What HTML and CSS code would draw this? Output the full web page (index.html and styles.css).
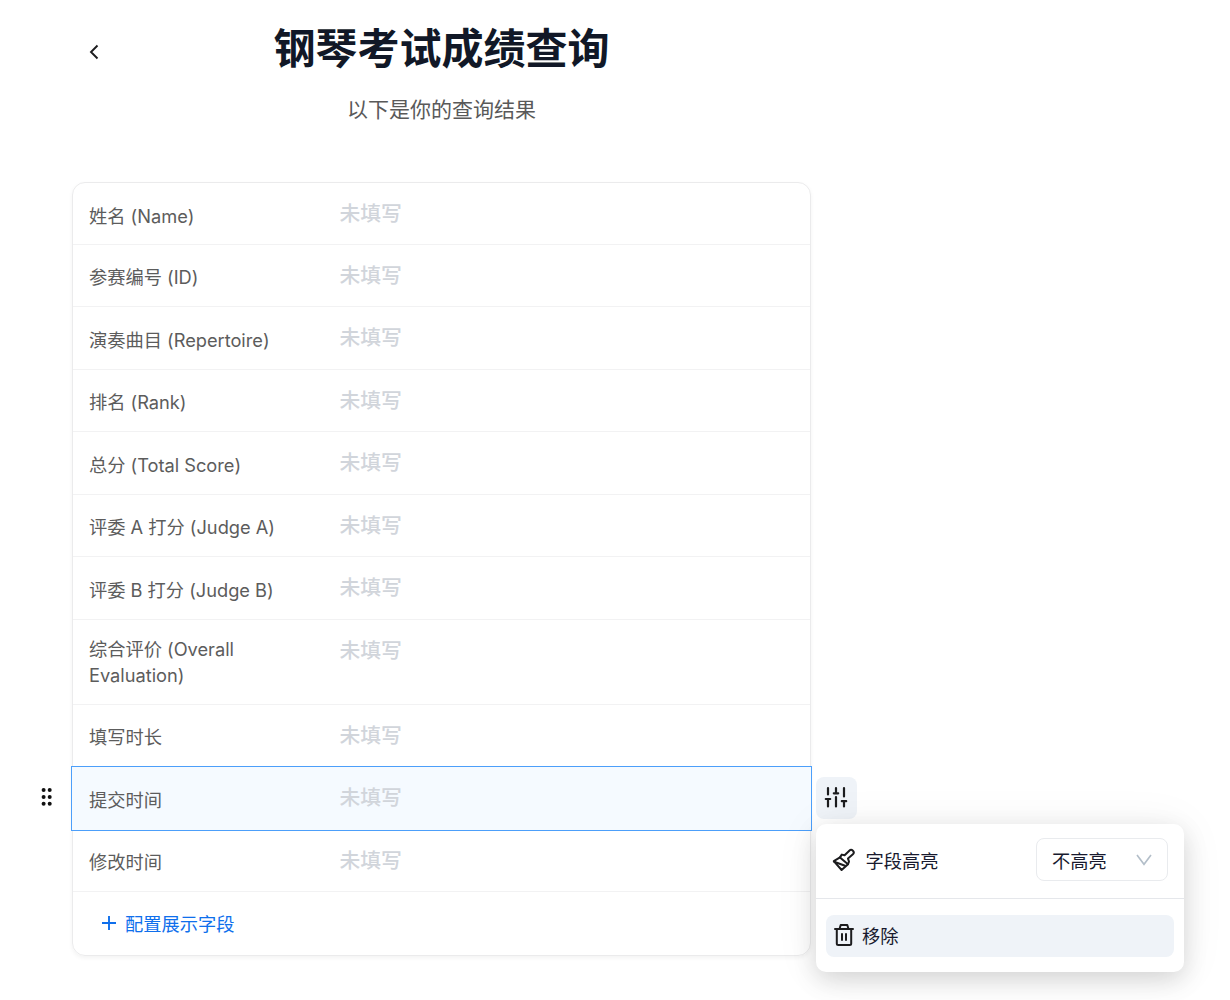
FILE: index.html
```html
<!DOCTYPE html>
<html lang="zh-CN">
<head>
  <meta charset="UTF-8" />
  <meta name="viewport" content="width=device-width, initial-scale=1.0" />
  <title>钢琴考试成绩查询</title>
  <link rel="stylesheet" href="styles.css">
</head>
<body>
  <main class="page">
    <header class="page-header">
      <button class="back-btn" aria-label="返回">
        <svg width="12" height="18" viewBox="0 0 12 18" fill="none" stroke="#1c1c1e" stroke-width="1.9"><path d="M9.5 2.5 3 9 9.5 15.5" /></svg>
      </button>
      <h1>钢琴考试成绩查询</h1>
      <p class="subtitle">以下是你的查询结果</p>
    </header>

    <section class="card">
      <div class="row"><span class="label">姓名 (Name)</span><span class="value">未填写</span></div>
      <div class="row"><span class="label">参赛编号 (ID)</span><span class="value">未填写</span></div>
      <div class="row"><span class="label">演奏曲目 (Repertoire)</span><span class="value">未填写</span></div>
      <div class="row"><span class="label">排名 (Rank)</span><span class="value">未填写</span></div>
      <div class="row"><span class="label">总分 (Total Score)</span><span class="value">未填写</span></div>
      <div class="row"><span class="label">评委 A 打分 (Judge A)</span><span class="value">未填写</span></div>
      <div class="row"><span class="label">评委 B 打分 (Judge B)</span><span class="value">未填写</span></div>
      <div class="row tall"><span class="label">综合评价 (Overall Evaluation)</span><span class="value">未填写</span></div>
      <div class="row"><span class="label">填写时长</span><span class="value">未填写</span></div>
      <div class="row selected">
        <span class="label">提交时间</span><span class="value">未填写</span>
        <svg class="drag-handle" width="12" height="20" viewBox="0 0 12 20" fill="#111">
          <circle cx="2.6" cy="3" r="2" /><circle cx="8.7" cy="3" r="2" />
          <circle cx="2.6" cy="9.9" r="2" /><circle cx="8.7" cy="9.9" r="2" />
          <circle cx="2.6" cy="16.8" r="2" /><circle cx="8.7" cy="16.8" r="2" />
        </svg>
        <button class="settings-btn" aria-label="设置">
          <svg width="24" height="24" viewBox="0 0 24 24" fill="none" stroke="#1c1c1e" stroke-width="2.2" stroke-linecap="round">
            <path d="M4 3v6.5M4 14.2v7.3M1.8 14h4.4M12 3v5M12 12v9.5M9.8 8.3h4.4M20 3v8.5M20 16.4v5.1M17.8 16.2h4.4" />
          </svg>
        </button>
        <div class="menu">
          <div class="menu-row">
            <svg class="brush" width="24" height="24" viewBox="0 0 24 24" fill="none" stroke="#1c1c1e" stroke-width="2" stroke-linejoin="round" stroke-linecap="round">
              <path d="M9.8 6.6 12.6 7.3 17.3 2.7a2.5 2.5 0 0 1 3.6 3.6L16 10.6 17 13.6 16 16.2 9.6 22 1.8 13.2 8 9.4Z" />
              <path d="M8 9.4 16 16.2M2.2 13.8 13 17.8" />
            </svg>
            <span>字段高亮</span>
            <div class="select">
              <span>不高亮</span>
              <svg width="16" height="12" viewBox="0 0 16 12" fill="none" stroke="#b3bec9" stroke-width="1.6"><path d="M1 1 8 10.3 15 1" /></svg>
            </div>
          </div>
          <div class="menu-footer">
            <div class="remove">
              <svg width="20" height="24" viewBox="0 0 20 24" fill="none" stroke="#1c1c1e" stroke-width="2" stroke-linejoin="round" stroke-linecap="round">
                <path d="M1 6h18M5.5 6 6.7 2h6.6l1.2 4M2.8 6v14.5q0 1.5 1.5 1.5h11.4q1.5 0 1.5-1.5V6M8 11v6M12 11v6" />
              </svg>
              <span>移除</span>
            </div>
          </div>
        </div>
      </div>
      <div class="row"><span class="label">修改时间</span><span class="value">未填写</span></div>
      <button class="add-field">
        <svg width="16" height="16" viewBox="0 0 16 16" fill="none" stroke="#0f6fec" stroke-width="1.9"><path d="M8 1v14M1 8h14" /></svg>
        <span>配置展示字段</span>
      </button>
    </section>
  </main>
</body>
</html>
```
FILE: styles.css
```css
:root {
  --blue: #0f6fec;
  --navy: #111827;
  --line: #f2f2f3;
  --hover: #eff3f8;
}

* {
  box-sizing: border-box;
}

html, body {
  margin: 0;
  padding: 0;
  height: 1000px;
  overflow: hidden;
  background: #fff;
  font-family: Inter, "Noto Sans CJK SC", sans-serif;
  font-size: 18.25px;
}

button {
  border: none;
  background: none;
  padding: 0;
  font: inherit;
  cursor: pointer;
}

svg {
  display: block;
  flex: none;
}

.page {
  width: 739px;
  margin-left: 72px;
}

.page-header {
  position: relative;
  height: 182px;
  padding-top: 19px;
  text-align: center;
}

.back-btn {
  position: absolute;
  left: 16px;
  top: 43px;
}

h1 {
  margin: 0;
  font-size: 42px;
  line-height: 60px;
  font-weight: 600;
  color: var(--navy);
}

.subtitle {
  margin: 16px 0 0;
  font-size: 21px;
  line-height: 30px;
  color: #595959;
}

.card {
  height: 774px;
  border: 1px solid #ebebec;
  border-radius: 13px;
  box-shadow: 0 2px 4px rgba(0, 0, 0, 0.05);
}

.row {
  display: flex;
  height: 62.5px;
  padding: 19.5px 16px 0;
  border-bottom: 1px solid var(--line);
}

.row:first-child {
  height: 61.8px;
}

.row.tall {
  height: 85px;
  padding-top: 16px;
}

.label {
  width: 190px;
  margin-right: 60.5px;
  line-height: 26px;
  letter-spacing: -0.02px;
  color: #5c5c5c;
}

.value {
  font-size: 20.8px;
  line-height: 30px;
  margin-top: -3.5px;
  font-weight: 500;
  color: #d1d5db;
}

.tall .value {
  margin-top: 0;
}

.row.selected {
  position: relative;
  height: 64.5px;
  margin: -1px -2px;
  padding: 19.5px 17px 0;
  border: 1px solid #4c9ffa;
  background: #f5faff;
}

.drag-handle {
  position: absolute;
  left: -31px;
  top: 20px;
}

.settings-btn {
  position: absolute;
  left: 743.5px;
  top: 10px;
  width: 41px;
  height: 42px;
  display: flex;
  align-items: center;
  justify-content: center;
  border-radius: 8px;
  background: var(--hover);
}

.settings-btn svg {
  margin-top: -2px;
}

.menu {
  position: absolute;
  left: 743.5px;
  top: 56.5px;
  width: 368.5px;
  height: 148px;
  border-radius: 10px;
  background: #fff;
  box-shadow: 0 8px 24px rgba(0, 0, 0, 0.14), 0 2px 48px rgba(0, 0, 0, 0.06);
  color: #181a2e;
}

.menu-row {
  display: flex;
  align-items: center;
  height: 75px;
  padding: 0 16px 2px;
  border-bottom: 1px solid #e5e7eb;
}

.brush {
  margin-right: 10px;
}

.select {
  display: flex;
  align-items: center;
  justify-content: space-between;
  width: 132px;
  height: 43px;
  margin-left: auto;
  padding: 0 15px;
  border: 1px solid #e9ebee;
  border-radius: 8px;
}

.menu-footer {
  padding: 16px 10.5px;
}

.remove {
  display: flex;
  align-items: center;
  gap: 8px;
  height: 42px;
  padding: 0 0 2px 8px;
  border-radius: 8px;
  background: var(--hover);
}

.add-field {
  display: flex;
  align-items: center;
  gap: 8px;
  height: 61px;
  margin-left: 28px;
  color: var(--blue);
}
```
